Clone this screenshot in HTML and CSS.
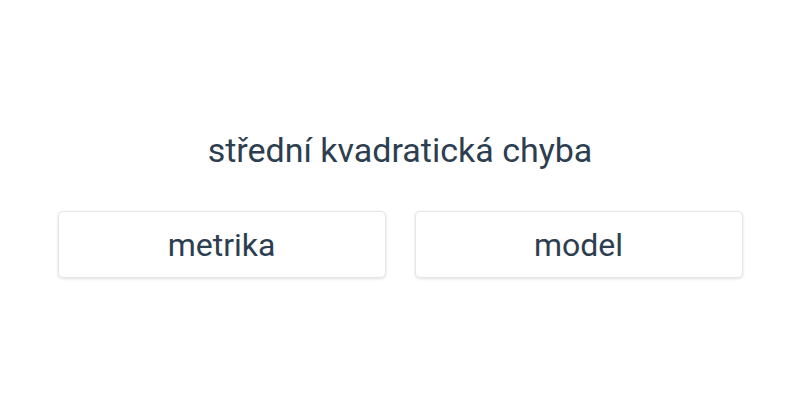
FILE: index.html
```html
<!DOCTYPE html>
<html lang="cs">
<head>
<meta charset="utf-8">
<link rel="stylesheet" href="styles.css">
</head>
<body>
<main class="quiz">
  <h1 class="question">střední kvadratická chyba</h1>
  <div class="options">
    <button class="option">metrika</button>
    <button class="option">model</button>
  </div>
</main>
</body>
</html>
```

FILE: styles.css
```css
html, body {
  margin: 0;
  padding: 0;
  background: #ffffff;
}
body {
  width: 800px;
  height: 400px;
  font-family: Roboto, "Liberation Sans", sans-serif;
  color: #2c3e50;
}
.quiz {
  display: flex;
  flex-direction: column;
  align-items: center;
  padding-top: 129px;
}
.question {
  margin: 0;
  font-size: 34px;
  font-weight: 400;
  line-height: 42px;
}
.options {
  display: flex;
  gap: 29px;
  margin-top: 40px;
}
.option {
  width: 328px;
  height: 67px;
  background: #ffffff;
  border: 1px solid #e6e6e6;
  border-radius: 5px;
  box-shadow: 0 1px 3px rgba(0, 0, 0, 0.12);
  font-family: Roboto, "Liberation Sans", sans-serif;
  font-size: 32px;
  color: #2c3e50;
  padding: 0;
}
```
